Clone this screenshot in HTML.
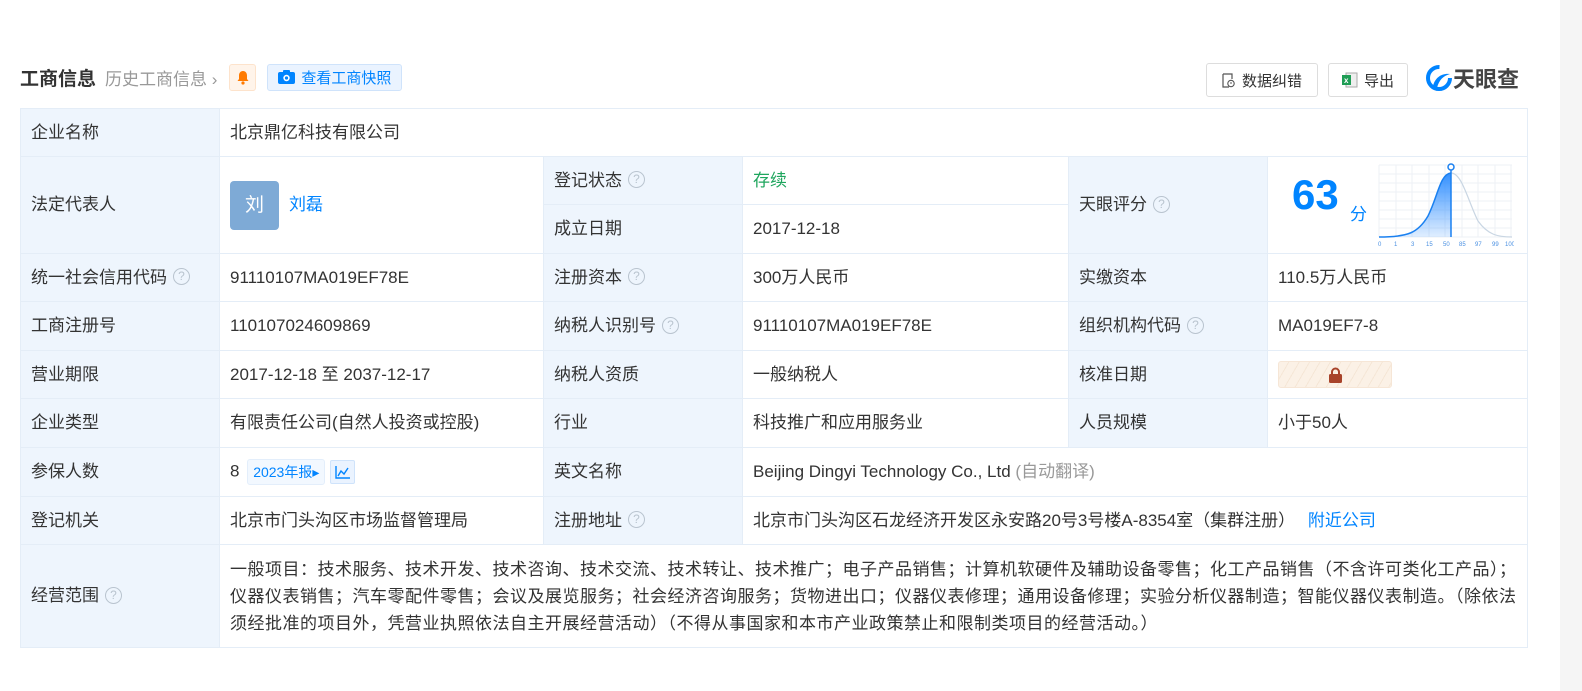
<!DOCTYPE html>
<html><head><meta charset="utf-8"><style>
*{margin:0;padding:0;box-sizing:border-box}
body{width:1582px;height:691px;background:#fff;font-family:"Liberation Sans","Noto Sans CJK SC",sans-serif;color:#333;font-size:17px;position:relative;overflow:hidden}
.strip{position:absolute;left:1560px;top:0;width:22px;height:691px;background:#f5f5f5}
.hd{position:absolute;top:64px;left:20px;display:flex;align-items:center;height:26px}
.t1{font-size:19px;font-weight:bold;color:#333}
.t2{font-size:17px;color:#999;margin-left:9px}
.bell{width:27px;height:27px;border:1px solid #fde3cc;background:#fff4ea;border-radius:3px;margin-left:12px;display:flex;align-items:center;justify-content:center}
.snap{height:27px;border:1px solid #cfe3fb;background:#eaf3ff;border-radius:3px;margin-left:11px;padding:0 10px;display:flex;align-items:center;color:#0084ff;font-size:15px}
.btn{position:absolute;top:63px;height:34px;border:1px solid #ddd;border-radius:3px;display:flex;align-items:center;justify-content:center;font-size:15px;color:#333;background:#fff}
table{position:absolute;left:20px;top:108px;border-collapse:collapse;table-layout:fixed;width:1507px}
td{border:1px solid #e4edf7;padding:0 10px;vertical-align:middle;font-size:17px;line-height:24px}
td.l{background:#eef5fd;color:#333}
.q{display:inline-block;width:17px;height:17px;border:1px solid #b9c4cf;border-radius:50%;color:#b9c4cf;font-size:12px;line-height:15px;text-align:center;vertical-align:middle;margin-left:6px;margin-top:-3px}
.a{color:#0084ff}
</style></head><body>
<div class="strip"></div>
<div class="hd"><span class="t1">工商信息</span><span class="t2">历史工商信息 ›</span>
<span class="bell"><svg width="14" height="15" viewBox="0 0 14 15"><path d="M7 1C4.5 1 3 3 3 5.5V9L1.5 11H12.5L11 9V5.5C11 3 9.5 1 7 1Z" fill="#ff7a00"/><circle cx="7" cy="13" r="1.6" fill="#ff7a00"/></svg></span>
<span class="snap"><svg width="17" height="14" viewBox="0 0 17 14" style="margin-right:6px"><rect x="0" y="2" width="17" height="12" rx="2" fill="#0084ff"/><rect x="5" y="0" width="7" height="3" rx="1" fill="#0084ff"/><circle cx="8.5" cy="8" r="3.2" fill="#fff"/><circle cx="8.5" cy="8" r="1.6" fill="#0084ff"/></svg>查看工商快照</span></div>
<div class="btn" style="left:1206px;width:112px"><svg width="13" height="15" viewBox="0 0 13 15" style="margin-right:7px"><path d="M1 1h9v5M1 1v13h6" fill="none" stroke="#555" stroke-width="1.2"/><circle cx="9" cy="10.5" r="3.2" fill="none" stroke="#555" stroke-width="1.1"/><path d="M9 9v2" stroke="#555"/></svg>数据纠错</div>
<div class="btn" style="left:1328px;width:80px"><svg width="16" height="16" viewBox="0 0 16 16" style="margin-right:6px"><rect x="4" y="1" width="11" height="14" fill="#eee" stroke="#aaa"/><rect x="0" y="3" width="9" height="10" fill="#1f9d55"/><text x="2" y="11" font-size="8" fill="#fff" font-family="Liberation Sans" font-weight="bold">x</text></svg>导出</div>
<div style="position:absolute;left:1426px;top:62px;display:flex;align-items:center">
<svg width="26" height="26" viewBox="0 0 26 26"><circle cx="13" cy="13" r="11" fill="none" stroke="#0084ff" stroke-width="4" stroke-dasharray="52 17"/><path d="M7 21C9 13 15 8 24 9 17 11 13 15 11 23Z" fill="#0084ff"/></svg>
<span style="font-size:22px;font-weight:bold;color:#444;margin-left:1px">天眼查</span></div>
<table>
<colgroup><col style="width:199px"><col style="width:324px"><col style="width:199px"><col style="width:326px"><col style="width:199px"><col style="width:260px"></colgroup>
<tr style="height:48px"><td class="l">企业名称</td><td colspan="5">北京鼎亿科技有限公司</td></tr>
<tr style="height:48px"><td class="l" rowspan="2">法定代表人</td><td rowspan="2"><span style="display:inline-block;width:49px;height:49px;background:#7eaad6;color:#fff;border-radius:4px;text-align:center;line-height:49px;font-size:19px;vertical-align:middle">刘</span><span class="a" style="margin-left:10px;vertical-align:middle">刘磊</span></td><td class="l">登记状态<span class="q">?</span></td><td style="color:#1fa65e">存续</td><td class="l" rowspan="2">天眼评分<span class="q">?</span></td><td rowspan="2" style="position:relative">
<span style="position:absolute;left:24px;top:26px;color:#0084ff;font-size:42px;font-weight:bold">63</span><span style="position:absolute;left:82px;top:46px;color:#0084ff;font-size:17px">分</span>
<svg style="position:absolute;left:110px;top:4px" width="136" height="88" viewBox="0 0 136 88"><defs><linearGradient id="g" x1="0" y1="0" x2="0" y2="1"><stop offset="0" stop-color="#3390ff"/><stop offset="1" stop-color="#3390ff" stop-opacity=".15"/></linearGradient></defs>
<g stroke="#eef1f5" stroke-width="1"><path d="M1 4H134M1 13H134M1 22H134M1 31H134M1 40H134M1 49H134M1 58H134M1 67H134M1 76H134M1 4V76M18 4V76M34 4V76M51 4V76M67 4V76M84 4V76M100 4V76M117 4V76M133 4V76"/></g>
<path d="M1 76C30 76 40 72 50 55 60 35 62 13 73 12 L73 76Z" fill="url(#g)"/>
<path d="M73 12C84 12 90 40 100 60 110 74 120 76 134 76" fill="none" stroke="#c9d6e3" stroke-width="1.2"/>
<path d="M1 76C30 76 40 72 50 55 60 35 62 13 73 12" fill="none" stroke="#1a80f0" stroke-width="1.5"/>
<path d="M73 8V76" stroke="#1a80f0" stroke-width="1.5"/><circle cx="73" cy="6" r="3" fill="#fff" stroke="#1a80f0" stroke-width="1.5"/>
<text y="85" font-size="6" fill="#4a90e2" font-family="Liberation Sans"><tspan x="0">0</tspan><tspan x="16">1</tspan><tspan x="33">3</tspan><tspan x="48">15</tspan><tspan x="65">50</tspan><tspan x="81">85</tspan><tspan x="97">97</tspan><tspan x="114">99</tspan><tspan x="127">100</tspan></text></svg></td></tr>
<tr style="height:49px"><td class="l">成立日期</td><td>2017-12-18</td></tr>
<tr style="height:48px"><td class="l">统一社会信用代码<span class="q">?</span></td><td>91110107MA019EF78E</td><td class="l">注册资本<span class="q">?</span></td><td>300万人民币</td><td class="l">实缴资本</td><td>110.5万人民币</td></tr>
<tr style="height:49px"><td class="l">工商注册号</td><td>110107024609869</td><td class="l">纳税人识别号<span class="q">?</span></td><td>91110107MA019EF78E</td><td class="l">组织机构代码<span class="q">?</span></td><td>MA019EF7-8</td></tr>
<tr style="height:48px"><td class="l">营业期限</td><td>2017-12-18 至 2037-12-17</td><td class="l">纳税人资质</td><td>一般纳税人</td><td class="l">核准日期</td><td><span style="display:inline-flex;width:114px;height:27px;border:1px solid #f6e6d6;border-radius:3px;background:repeating-linear-gradient(120deg,#fbf1e6 0 8px,#f5e6d6 8px 9px);align-items:center;justify-content:center;vertical-align:middle"><svg width="15" height="16" viewBox="0 0 15 16"><path d="M4 7V5a3.5 3.5 0 0 1 7 0v2" fill="none" stroke="#a8432a" stroke-width="2"/><rect x="1" y="7" width="13" height="9" rx="1.5" fill="#a8432a"/></svg></span></td></tr>
<tr style="height:49px"><td class="l">企业类型</td><td>有限责任公司(自然人投资或控股)</td><td class="l">行业</td><td>科技推广和应用服务业</td><td class="l">人员规模</td><td>小于50人</td></tr>
<tr style="height:49px"><td class="l">参保人数</td><td>8 <span style="display:inline-block;height:26px;line-height:24px;border:1px solid #e3eefb;background:#f2f8ff;color:#0084ff;font-size:14px;padding:0 5px;border-radius:3px;margin-left:3px;vertical-align:middle">2023年报▸</span> <span style="display:inline-block;width:25px;height:24px;border:1px solid #cfe3fb;background:#eaf3ff;vertical-align:middle;border-radius:2px;text-align:center;line-height:0"><svg width="15" height="13" viewBox="0 0 15 13" style="margin-top:5px"><path d="M1 0V12H15M3 10L6 5 9 8 13 2" fill="none" stroke="#0084ff" stroke-width="1.4"/></svg></span></td><td class="l">英文名称</td><td colspan="3">Beijing Dingyi Technology Co., Ltd <span style="color:#999">(自动翻译)</span></td></tr>
<tr style="height:48px"><td class="l">登记机关</td><td>北京市门头沟区市场监督管理局</td><td class="l">注册地址<span class="q">?</span></td><td colspan="3">北京市门头沟区石龙经济开发区永安路20号3号楼A-8354室（集群注册） <span class="a" style="margin-left:8px">附近公司</span></td></tr>
<tr style="height:103px"><td class="l">经营范围<span class="q">?</span></td><td colspan="5" style="line-height:27px;letter-spacing:0.5px">一般项目：技术服务、技术开发、技术咨询、技术交流、技术转让、技术推广；电子产品销售；计算机软硬件及辅助设备零售；化工产品销售（不含许可类化工产品）；仪器仪表销售；汽车零配件零售；会议及展览服务；社会经济咨询服务；货物进出口；仪器仪表修理；通用设备修理；实验分析仪器制造；智能仪器仪表制造。（除依法须经批准的项目外，凭营业执照依法自主开展经营活动）（不得从事国家和本市产业政策禁止和限制类项目的经营活动。）</td></tr>
</table>
</body></html>
